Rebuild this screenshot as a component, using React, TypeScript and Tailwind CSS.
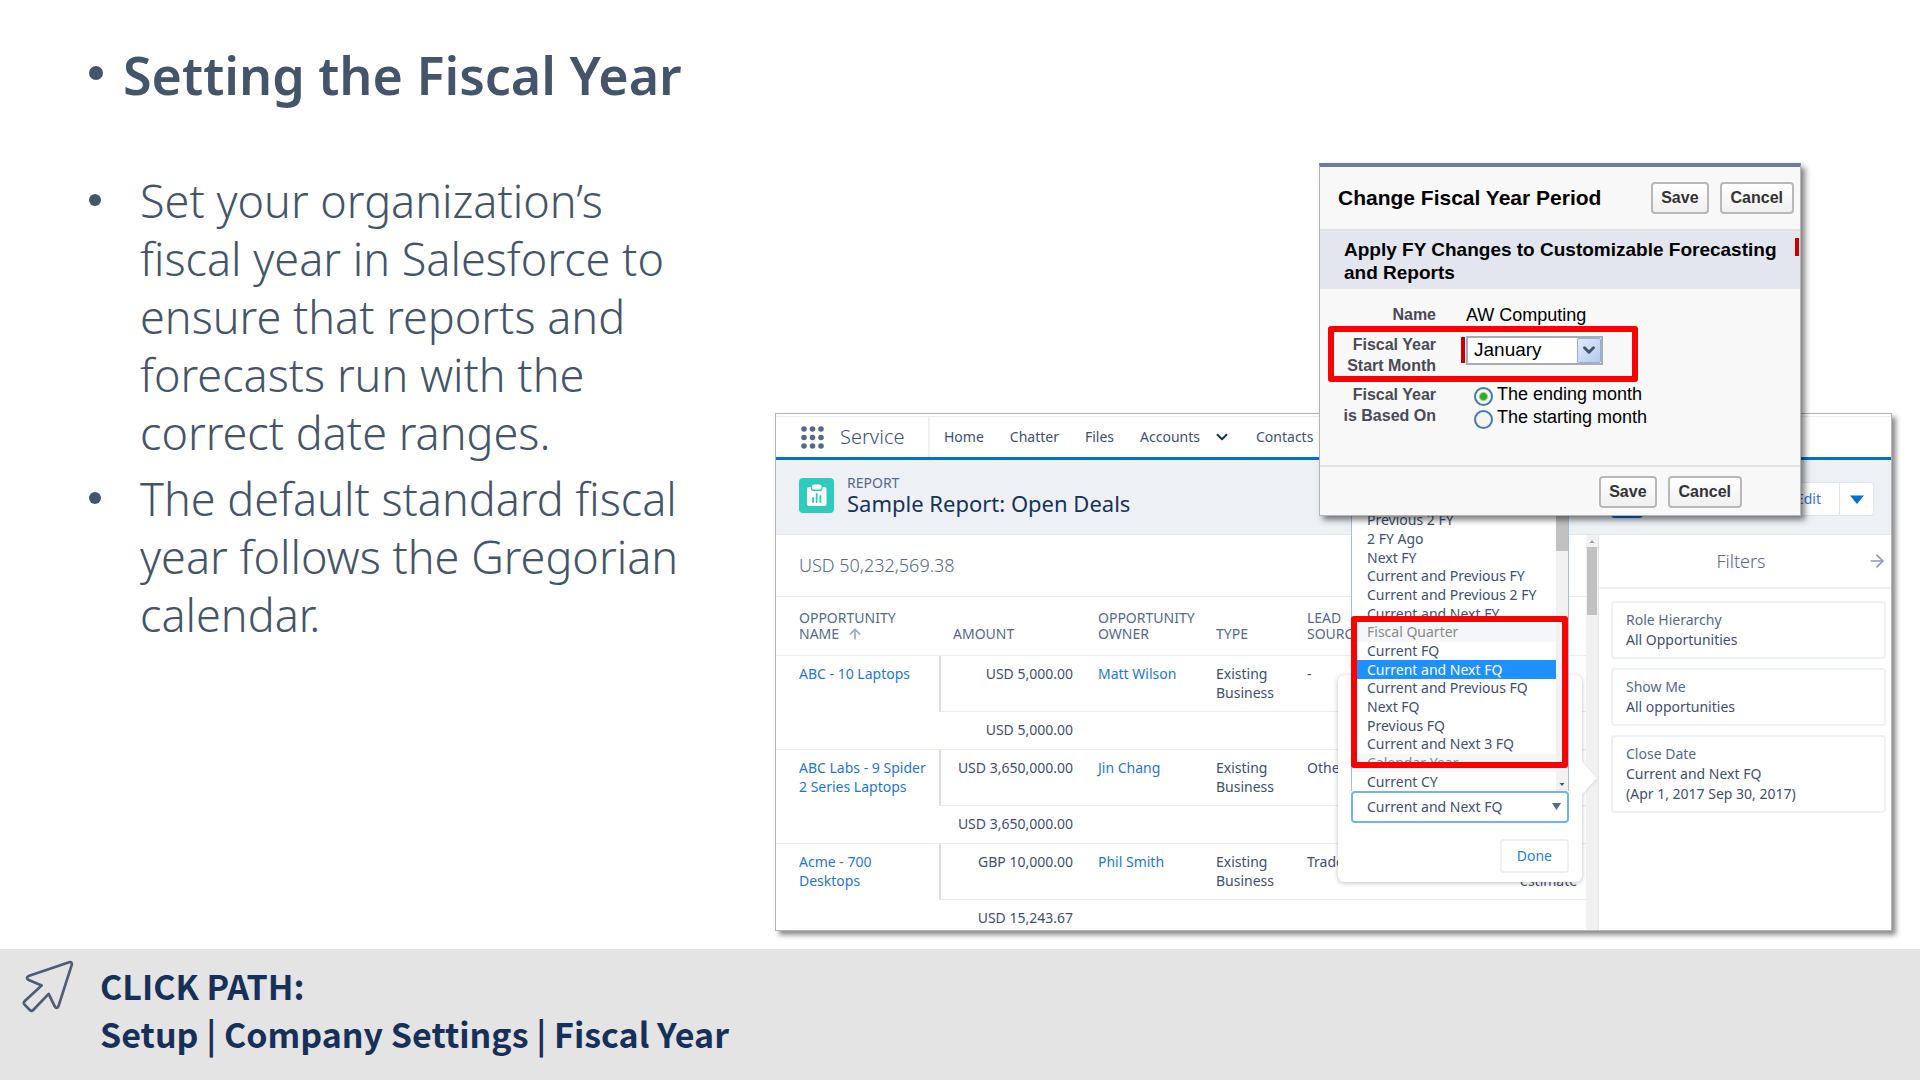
import { useState } from 'react';
import { ArrowRight, ArrowUp, ChevronDown } from 'lucide-react';

const rows = [
  { name: 'ABC - 10 Laptops', amount: 'USD 5,000.00', owner: 'Matt Wilson', type: 'Existing Business', source: '-', note: '', total: 'USD 5,000.00' },
  { name: 'ABC Labs - 9 Spider 2 Series Laptops', amount: 'USD 3,650,000.00', owner: 'Jin Chang', type: 'Existing Business', source: 'Other', note: '', total: 'USD 3,650,000.00' },
  { name: 'Acme - 700 Desktops', amount: 'GBP 10,000.00', owner: 'Phil Smith', type: 'Existing Business', source: 'Trade Show', note: 'estimate', total: 'USD 15,243.67' },
];

const periods = [
  { label: 'Previous 2 FY' },
  { label: '2 FY Ago' },
  { label: 'Next FY' },
  { label: 'Current and Previous FY' },
  { label: 'Current and Previous 2 FY' },
  { label: 'Current and Next FY' },
  { label: 'Fiscal Quarter', group: true },
  { label: 'Current FQ' },
  { label: 'Current and Next FQ' },
  { label: 'Current and Previous FQ' },
  { label: 'Next FQ' },
  { label: 'Previous FQ' },
  { label: 'Current and Next 3 FQ' },
  { label: 'Calendar Year', group: true },
  { label: 'Current CY' },
];

const filters = [
  { label: 'Role Hierarchy', lines: ['All Opportunities'] },
  { label: 'Show Me', lines: ['All opportunities'] },
  { label: 'Close Date', lines: ['Current and Next FQ', '(Apr 1, 2017 Sep 30, 2017)'] },
];

function SlideText() {
  return (
    <div className="w-2/5 shrink-0 pt-[45px] pl-[89px] text-[#44546a]">
      <h1 className="flex gap-5 text-[52px] leading-[60px] font-semibold whitespace-nowrap">
        <span className="mt-[21px] size-3.5 shrink-0 rounded-full bg-[#44546a]" />
        Setting the Fiscal Year
      </h1>
      <ul className="mt-[67px] flex flex-col gap-2 text-[45px] leading-[58px] font-light">
        <li className="flex gap-[39px]">
          <span className="mt-[22px] size-3 shrink-0 rounded-full bg-[#44546a]" />
          <p className="w-[560px]">
            Set your organization’s fiscal year in Salesforce to ensure that reports and forecasts run with the correct date ranges.
          </p>
        </li>
        <li className="flex gap-[39px]">
          <span className="mt-[22px] size-3 shrink-0 rounded-full bg-[#44546a]" />
          <p className="w-[560px]">The default standard fiscal year follows the Gregorian calendar.</p>
        </li>
      </ul>
    </div>
  );
}

function AppNav() {
  return (
    <nav className="mt-[2px] flex h-11 items-center border-t border-b-[3px] border-t-[#e8edf4] border-b-[#0070d2] text-sm text-[#3e5077]">
      <div className="flex h-full w-[154px] shrink-0 items-center gap-4 border-r-2 border-[#eef1f6] pl-[25px]">
        <svg viewBox="0 0 23 23" className="size-[23px] fill-[#54698d]">
          {[3, 11.5, 20].map((y) => [3, 11.5, 20].map((x) => <circle key={`${x}-${y}`} cx={x} cy={y} r="2.8" />))}
        </svg>
        <span className="text-xl font-light">Service</span>
      </div>
      <div className="flex items-center gap-[26px] pb-px pl-3.5">
        <a href="#home">Home</a>
        <a href="#chatter">Chatter</a>
        <a href="#files">Files</a>
        <a href="#accounts" className="flex items-center gap-3.5">
          Accounts
          <ChevronDown className="-mx-px size-[18px] text-[#16325c]" strokeWidth={2.5} />
        </a>
        <a href="#contacts">Contacts</a>
      </div>
    </nav>
  );
}

function ReportHeader() {
  return (
    <div className="flex h-[75px] items-center border-b border-[#e3e8ef] bg-[#edf1f6] pr-[17px] pl-[23px]">
      <svg viewBox="0 0 35 35" className="mb-1 size-[35px]">
        <rect width="35" height="35" rx="4" fill="#2ecbbe" />
        <path d="M10 9h2v1.500a2.500 2.500 0 0 0 2.500 2.500h6.500a2.500 2.500 0 0 0 2.500-2.500V9h2a2 2 0 0 1 2 2v15a2 2 0 0 1-2 2H10a2 2 0 0 1-2-2V11a2 2 0 0 1 2-2z" fill="#fff" />
        <rect x="13" y="6.500" width="9.500" height="5" rx="1.800" fill="#fff" />
        <path d="M14 20v4M17.700 16v8M21.400 18v6" stroke="#2ecbbe" strokeWidth="1.800" strokeLinecap="round" />
      </svg>
      <div className="mb-1 ml-[13px]">
        <p className="text-sm leading-4 text-[#54698d]">REPORT</p>
        <h2 className="text-[22px] leading-6 text-[#16325c]">Sample Report: Open Deals</h2>
      </div>
      <div className="mt-1.5 ml-auto flex h-9 items-start text-sm text-[#2f78d8]">
        <button aria-label="Toggle filters" className="mr-[128px] h-full w-8 rounded bg-[#0070d2]" />
        <button className="h-[34px] rounded-l border border-[#dfe5ee] bg-white pr-[18px] pl-6">Edit</button>
        <button aria-label="More actions" className="flex h-[34px] w-[34px] items-center justify-center rounded-r border border-l-0 border-[#dfe5ee] bg-white">
          <svg viewBox="0 0 14 9" className="w-3.5 fill-[#0070d2]">
            <path d="M0 .500h14L7 9z" />
          </svg>
        </button>
      </div>
    </div>
  );
}

function ReportTable() {
  return (
    <table className="w-full table-fixed border-separate border-spacing-0 text-left text-sm leading-[19px] text-[#3e4f72]">
      <colgroup>
        <col className="w-[163px]" />
        <col className="w-[149px]" />
        <col className="w-[118px]" />
        <col className="w-[91px]" />
        <col />
        <col className="w-[76px]" />
      </colgroup>
      <thead>
        <tr className="h-[59px] align-bottom leading-4 text-[#54698d] *:border-b *:border-[#e8ecf4] *:pb-[13px] *:font-normal">
          <th className="pl-[23px]">
            OPPORTUNITY
            <span className="flex items-center gap-2">
              NAME <ArrowUp className="size-4 text-[#9aa8bd]" strokeWidth={2.5} />
            </span>
          </th>
          <th className="pl-3.5">AMOUNT</th>
          <th className="pl-2.5">
            OPPORTUNITY
            <br />
            OWNER
          </th>
          <th className="pl-2.5">TYPE</th>
          <th className="pl-2.5">
            LEAD
            <br />
            SOURCE
          </th>
          <th />
        </tr>
      </thead>
      {rows.map((row) => (
        <tbody key={row.name}>
          <tr className="h-14 align-top">
            <td rowSpan={2} className="border-b border-[#e8ecf4] pt-2 pr-2 pl-[23px]">
              <a href="#record" className="text-[#1f75dc]">{row.name}</a>
            </td>
            <td className="border-b border-l-2 border-b-[#e8ecf4] border-l-[#d8dde9] pt-2 pr-[15px] text-right whitespace-nowrap">{row.amount}</td>
            <td className="border-b border-[#e8ecf4] pt-2 pl-2.5">
              <a href="#owner" className="text-[#1f75dc]">{row.owner}</a>
            </td>
            <td className="border-b border-[#e8ecf4] pt-2 pl-2.5">{row.type}</td>
            <td className="border-b border-[#e8ecf4] pt-2 pl-2.5">{row.source}</td>
            <td className="border-b border-[#e8ecf4] pt-[27px] pl-2.5">{row.note}</td>
          </tr>
          <tr className="h-[38px]">
            <td className="border-b border-[#e8ecf4] pr-[15px] pb-0.5 text-right whitespace-nowrap">{row.total}</td>
            <td colSpan={4} className="border-b border-[#e8ecf4]" />
          </tr>
        </tbody>
      ))}
    </table>
  );
}

function FilterPanel() {
  return (
    <aside className="w-[293px] shrink-0 border-l border-[#e3e6ec] text-sm">
      <header className="flex h-[54px] items-center border-b-2 border-[#eef1f6] pr-1 pl-4 text-lg font-light text-[#54698d]">
        <span className="flex-1 text-center">Filters</span>
        <ArrowRight className="size-5 text-[#8c9ab0]" strokeWidth={2} />
      </header>
      <div className="flex flex-col gap-[9px] py-3 pr-[5px] pl-3">
        {filters.map((filter) => (
          <section key={filter.label} className="rounded border-2 border-[#eef1f6] px-[13px] py-[7px]">
            <h3 className="leading-5 text-[#54698d]">{filter.label}</h3>
            {filter.lines.map((line) => (
              <p key={line} className="leading-5 text-[#3e4f72]">{line}</p>
            ))}
          </section>
        ))}
      </div>
    </aside>
  );
}

function PeriodPopover() {
  const [period, setPeriod] = useState('Current and Next FQ');

  return (
    <div className="absolute right-[309px] bottom-12 flex h-[207px] w-[244px] flex-col items-end justify-end gap-4 rounded-md bg-white px-[13px] pb-[9px] text-sm text-[#3e4f72] shadow-[0_1px_5px_rgba(0,0,0,0.25)]">
      <svg viewBox="0 0 15 32" className="absolute top-[87px] -right-[15px] h-8 fill-white drop-shadow-[1px_1px_1px_rgba(0,0,0,0.08)]">
        <path d="M0 0l15 16L0 32z" />
      </svg>
      <div className="relative w-full">
        <select
          aria-label="Close Date"
          value={period}
          onChange={(e) => setPeriod(e.target.value)}
          className="block h-8 w-full appearance-none rounded border-2 border-[#6fb3f2] bg-white pl-3.5"
        >
          {periods.filter((p) => !p.group).map((p) => (
            <option key={p.label}>{p.label}</option>
          ))}
        </select>
        <svg viewBox="0 0 9 7" className="pointer-events-none absolute top-3 right-2 w-[9px] fill-[#54698d]">
          <path d="M0 0h9L4.500 7z" />
        </svg>
      </div>
      <button className="h-[34px] rounded border-2 border-[#eceff4] px-[15px] text-[#1f80e0]">Done</button>

      <div className="absolute bottom-[91px] left-[13px] flex h-[280px] w-[218px] border-x border-[#a9bcd8] bg-white">
        <ul role="listbox" aria-label="Close Date periods" className="grid flex-1 auto-rows-fr">
          {periods.map((p) => (
            <li
              key={p.label}
              role={p.group ? 'presentation' : 'option'}
              aria-selected={p.group ? undefined : p.label === period}
              className={`flex items-center pl-[15px] leading-[18px] ${
                p.group ? 'bg-[#f4f6f9] text-[#8a8a8a]' : p.label === period ? 'bg-[#1e90ff] text-white' : ''
              }`}
            >
              {p.label}
            </li>
          ))}
        </ul>
        <div className="flex w-3 flex-col justify-between bg-[#f1f1f1]">
          <span className="h-10 bg-[#c1c1c1]" />
          <svg viewBox="0 0 12 12" className="w-3 fill-[#505050]">
            <path d="M3.500 4h5L6 7z" />
          </svg>
        </div>
      </div>
      <div className="absolute bottom-[114px] left-[13px] h-[152px] w-[217px] rounded-[3px] border-[6px] border-[#ff0000]" />
    </div>
  );
}

function Report() {
  return (
    <section className="relative flex h-[518px] flex-col border border-[#b5b5b5] bg-white shadow-[4px_4px_5px_rgba(0,0,0,0.45)]">
      <AppNav />
      <ReportHeader />
      <div className="flex min-h-0 flex-1 overflow-hidden">
        <div className="min-w-0 flex-1">
          <p className="flex h-[62px] items-center border-b border-[#e8ecf4] pb-0.5 pl-[23px] text-lg font-light text-[#54698d]">USD 50,232,569.38</p>
          <ReportTable />
        </div>
        <div className="w-3 shrink-0 bg-[#f1f1f1]">
          <svg viewBox="0 0 12 12" className="w-3 fill-[#a3a3a3]">
            <path d="M3.500 8h5L6 5z" />
          </svg>
          <div className="mx-px h-[68px] bg-[#c1c1c1]" />
        </div>
        <FilterPanel />
      </div>
      <PeriodPopover />
    </section>
  );
}

function DialogButtons() {
  return (
    <div className="flex gap-[11px] text-base font-bold text-[#333]">
      <button className="h-8 rounded border-2 border-[#b8b8b8] bg-gradient-to-b from-white to-[#f0f0f0] px-2">Save</button>
      <button className="h-8 rounded border-2 border-[#b8b8b8] bg-gradient-to-b from-white to-[#f0f0f0] px-[9px]">Cancel</button>
    </div>
  );
}

function FiscalYearDialog() {
  const [basis, setBasis] = useState('ending');

  return (
    <form className="absolute top-[163px] right-[119px] flex h-[353px] w-[482px] flex-col border border-t-4 border-[#b5b5b5] border-t-[#717a96] bg-[#f8f8f8] font-['Liberation_Sans',Arial,sans-serif] text-lg text-black shadow-[4px_4px_6px_rgba(0,0,0,0.5)]">
      <header className="flex h-16 items-center justify-between border-b-2 border-[#e2e2e2] pr-1.5 pl-[18px]">
        <h2 className="text-[21px] font-bold">Change Fiscal Year Period</h2>
        <DialogButtons />
      </header>
      <div className="flex h-[58px] items-start justify-between bg-[#e3e5ef] pt-[7px] pr-px pl-6">
        <h3 className="w-[440px] text-[19px] leading-[23px] font-bold">Apply FY Changes to Customizable Forecasting and Reports</h3>
        <span className="h-[18px] w-1 bg-[#cc0000]" />
      </div>

      <dl className="flex pt-4 leading-5">
        <dt className="w-[116px] text-right text-base leading-5 font-bold text-[#4a4a56]">Name</dt>
        <dd className="pl-[30px]">AW Computing</dd>
      </dl>
      <div className="relative mt-[9px] flex items-center">
        <div className="absolute -top-[8px] left-2 h-14 w-[310px] rounded-[3px] border-[6px] border-[#ff0000]" />
        <label htmlFor="start-month" className="w-[116px] text-right text-base leading-[21px] font-bold text-[#4a4a56]">
          Fiscal Year
          <br />
          Start Month
        </label>
        <span className="mb-2.5 ml-[25px] h-[26px] w-1 bg-[#cc0000]" />
        <div className="relative mb-2.5 ml-px">
          <select id="start-month" defaultValue="January" className="block h-[29px] w-[137px] appearance-none border-2 border-[#a8adb4] bg-white pl-1.5 text-[19px] leading-6">
            <option>January</option>
            <option>April</option>
            <option>July</option>
            <option>October</option>
          </select>
          <span className="pointer-events-none absolute top-[2px] right-[2px] flex h-[25px] w-6 items-center justify-center rounded-xs border border-[#8fb0d8] bg-gradient-to-br from-[#dfeafa] to-[#b4cbec]">
            <ChevronDown className="size-[18px] text-[#44546a]" strokeWidth={4} />
          </span>
        </div>
      </div>
      <fieldset className="mt-2 flex">
        <legend className="float-left w-[116px] text-right text-base leading-[21px] font-bold text-[#4a4a56]">
          Fiscal Year
          <br />
          is Based On
        </legend>
        <div className="-mt-px flex flex-col pl-[38px] leading-[23px]">
          {['ending', 'starting'].map((value) => (
            <label key={value} className="flex items-start gap-1">
              <input
                type="radio"
                name="basis"
                checked={basis === value}
                onChange={() => setBasis(value)}
                className="mt-1 size-[19px] appearance-none rounded-full border-2 border-[#4a7ba6] bg-[#f4f4f0] checked:bg-[radial-gradient(circle,#2fae22_0_3px,#f4f4f0_5px)]"
              />
              The {value} month
            </label>
          ))}
        </div>
      </fieldset>

      <footer className="mt-auto flex h-[50px] items-center justify-end border-t-2 border-[#e2e2e2] pt-0.5 pr-[58px]">
        <DialogButtons />
      </footer>
    </form>
  );
}

export default function App() {
  return (
    <main className="flex min-h-screen flex-col bg-white font-['Noto_Sans','Open_Sans',sans-serif]">
      <div className="flex flex-1">
        <SlideText />
        <div className="relative flex-1 pt-[413px] pr-[28px] pb-[18px] pl-[7px]">
          <Report />
          <FiscalYearDialog />
        </div>
      </div>
      <footer className="flex h-[131px] bg-[#e4e4e4] pt-[11px] pl-[22px] font-['Noto_Sans_CJK_SC',sans-serif] text-[34px] leading-[48px] font-bold text-[#17305a]">
        <svg viewBox="38 30 154 158" className="h-[53px] w-[52px]" fill="none" stroke="#4d5d75" strokeWidth="8" strokeLinejoin="round">
          <path d="M178 37Q187 34 186 44L146 168Q141 178 135 168L117 131 71 179Q66 184 61 179L45 163Q41 158 45 153L96 106 56 89Q48 83 57 78Z" />
        </svg>
        <p className="pt-0.5 pl-[26px]">
          CLICK PATH:
          <br />
          Setup | Company Settings | Fiscal Year
        </p>
      </footer>
    </main>
  );
}
